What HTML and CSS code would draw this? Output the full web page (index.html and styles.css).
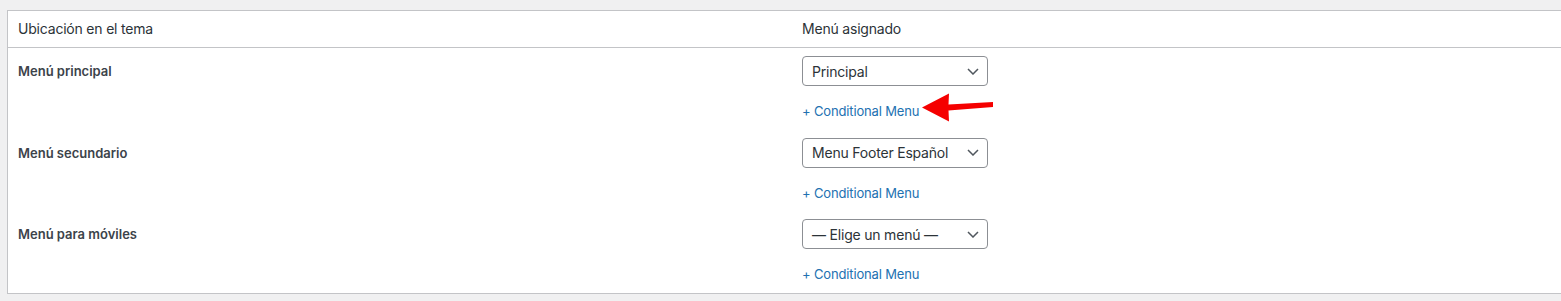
FILE: index.html
```html
<!DOCTYPE html>
<html lang="es">
<head>
    <meta charset="UTF-8">
    <meta name="viewport" content="width=device-width, initial-scale=1.0">
    <title>Menús - Gestionar ubicaciones</title>
    <link rel="stylesheet" href="styles.css">
</head>
<body>
    <div class="wrap">
        <table class="menu-locations">
            <colgroup>
                <col class="col-location">
                <col class="col-menu">
            </colgroup>
            <thead>
                <tr>
                    <th>Ubicación en el tema</th>
                    <th>Menú asignado</th>
                </tr>
            </thead>
            <tbody>
                <tr>
                    <th class="location-name">Menú principal</th>
                    <td>
                        <div class="fake-select">
                            <span>Principal</span>
                            <svg class="chevron" width="12" height="7" viewBox="0 0 12 7"><path d="M1 1l5 5 5-5" fill="none" stroke="#50575e" stroke-width="1.5"/></svg>
                        </div>
                        <div class="conditional">
                            <a href="#">+ Conditional Menu</a>
                            <!-- red pointer arrow from the screenshot -->
                            <svg class="pointer" width="72" height="30" viewBox="0 0 72 30"><polygon points="1,15.5 28,1.5 27.5,12.5 72,10 72,15 27.5,18.5 28,29.5" fill="#f50000"/></svg>
                        </div>
                    </td>
                </tr>
                <tr>
                    <th class="location-name">Menú secundario</th>
                    <td>
                        <div class="fake-select">
                            <span>Menu Footer Español</span>
                            <svg class="chevron" width="12" height="7" viewBox="0 0 12 7"><path d="M1 1l5 5 5-5" fill="none" stroke="#50575e" stroke-width="1.5"/></svg>
                        </div>
                        <div class="conditional">
                            <a href="#">+ Conditional Menu</a>
                        </div>
                    </td>
                </tr>
                <tr>
                    <th class="location-name">Menú para móviles</th>
                    <td>
                        <div class="fake-select">
                            <span>— Elige un menú —</span>
                            <svg class="chevron" width="12" height="7" viewBox="0 0 12 7"><path d="M1 1l5 5 5-5" fill="none" stroke="#50575e" stroke-width="1.5"/></svg>
                        </div>
                        <div class="conditional">
                            <a href="#">+ Conditional Menu</a>
                        </div>
                    </td>
                </tr>
            </tbody>
        </table>
    </div>
</body>
</html>
```

FILE: styles.css
```css
html, body {
    overflow: hidden;
}
body {
    margin: 0;
    background-color: #f0f0f1;
    font-family: Inter, "Liberation Sans", sans-serif;
    color: #2c3338;
}
.wrap {
    padding: 10px 0 0 7px;
}
.menu-locations {
    width: 1580px;
    table-layout: fixed;
    border-spacing: 0;
    border: 1px solid #c3c4c7;
    background-color: #fff;
}
.col-location {
    width: 784px;
}
.menu-locations th,
.menu-locations td {
    text-align: left;
    vertical-align: top;
    padding: 8px 10px;
}
.menu-locations thead th {
    font-size: 14px;
    font-weight: 400;
    line-height: 20px;
    letter-spacing: -0.2px;
    color: #2c3338;
    border-bottom: 1px solid #c3c4c7;
}
.location-name {
    font-size: 13px;
    font-weight: 600;
    line-height: 30px;
    color: #3c434a;
}
.fake-select {
    box-sizing: border-box;
    width: 186px;
    height: 30px;
    display: flex;
    align-items: center;
    justify-content: space-between;
    padding: 0 8px 0 9px;
    border: 1px solid #8c8f94;
    border-radius: 4px;
    font-size: 14px;
    letter-spacing: -0.2px;
    color: #2c3338;
}
.chevron {
    display: block;
}
.conditional {
    position: relative;
    margin-top: 15px;
    font-size: 13px;
    line-height: 20.5px;
    letter-spacing: -0.15px;
}
.conditional a {
    color: #2271b1;
    text-decoration: none;
}
.pointer {
    position: absolute;
    left: 119px;
    top: -9px;
}
```
